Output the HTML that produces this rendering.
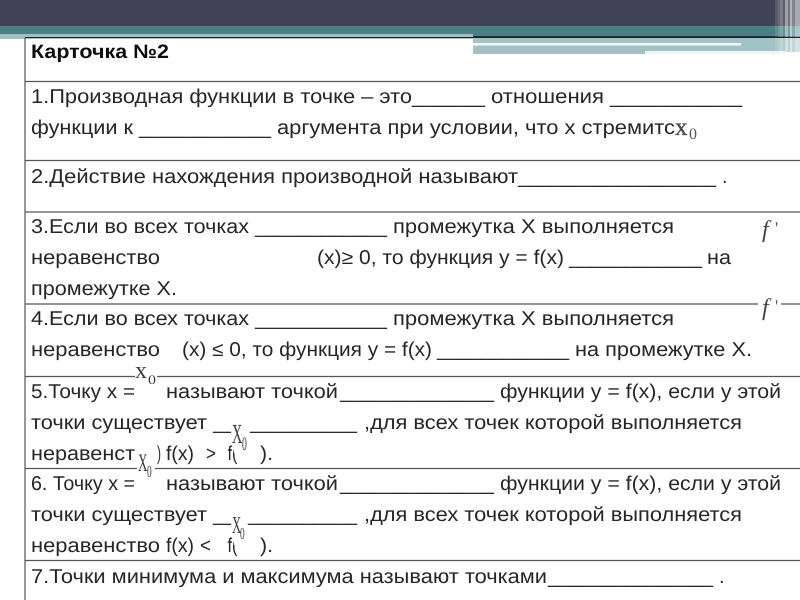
<!DOCTYPE html>
<html lang="ru">
<head>
<meta charset="utf-8">
<title>Карточка №2</title>
<style>
html,body{margin:0;padding:0;background:#fff;width:800px;height:600px;overflow:hidden}
svg{position:absolute;left:0;top:0}
text{font-family:"Liberation Sans",sans-serif;font-size:20px;fill:#282828;white-space:pre;text-rendering:geometricPrecision}
.b{font-weight:bold;fill:#111;font-size:19.5px}
.m{font-family:"Liberation Serif",serif;fill:#3c3c3c}
</style>
</head>
<body>
<svg width="800" height="600" viewBox="0 0 800 600">
<defs>
<filter id="s" x="-2%" y="-2%" width="104%" height="104%"><feGaussianBlur stdDeviation="0.32"/></filter>
</defs>

<rect x="0" y="0" width="800" height="26" fill="#414257"/>
<rect x="0" y="26" width="800" height="10" fill="#497f85"/>
<rect x="0" y="34" width="473" height="5" fill="#9cc0c3"/>
<rect x="473" y="36" width="327" height="2" fill="#17383c"/>
<rect x="473" y="38" width="327" height="14" fill="#a0c3c6"/>
<rect x="473" y="43" width="268" height="2.5" fill="#f4f9f9"/>
<rect x="473" y="46" width="172" height="8" fill="#a3c2c5"/>
<rect x="645" y="51" width="140" height="3" fill="#eef5f5"/>
<g fill="#fff">
<rect x="775" y="0" width="3" height="52" opacity=".12"/>
<rect x="778" y="0" width="2" height="52" opacity=".2"/>
<rect x="780" y="0" width="3" height="54" opacity=".3"/>
<rect x="783" y="0" width="2" height="54" opacity=".15"/>
<rect x="785" y="0" width="3" height="54" opacity=".5"/>
<rect x="788" y="0" width="2" height="54" opacity=".25"/>
<rect x="790" y="0" width="2" height="54" opacity=".6"/>
<rect x="792" y="0" width="3" height="54" opacity=".35"/>
<rect x="795" y="0" width="5" height="54" opacity=".55"/>
</g>

<g stroke="#555" fill="none">
<path d="M25 38V600" stroke-width="1.2"/>
<path d="M25 37.5H800" stroke-width="1" stroke="#222"/>
<path d="M25 81.5H800M25 160.5H800M25 212H800M25 304H800M25 376.5H800M25 468.5H800M25 560.5H800" stroke-width="1.2"/>
</g>

<g filter="url(#s)">
<text class="b" x="31" y="58" textLength="138" lengthAdjust="spacingAndGlyphs">Карточка №2</text>

<text x="31" y="103" textLength="381" lengthAdjust="spacingAndGlyphs">1.Производная функции в точке – это</text>
<text x="412" y="103" textLength="73" lengthAdjust="spacingAndGlyphs">_______</text>
<text x="491" y="103" textLength="113" lengthAdjust="spacingAndGlyphs">отношения</text>
<text x="610" y="103" textLength="132" lengthAdjust="spacingAndGlyphs">____________</text>

<text x="31" y="134" textLength="102" lengthAdjust="spacingAndGlyphs">функции к</text>
<text x="139" y="134" textLength="132" lengthAdjust="spacingAndGlyphs">____________</text>
<text x="277" y="134" textLength="398" lengthAdjust="spacingAndGlyphs">аргумента при условии, что x стремитс</text>

<text x="31" y="183" textLength="487" lengthAdjust="spacingAndGlyphs">2.Действие нахождения производной называют</text>
<text x="518" y="183" textLength="198" lengthAdjust="spacingAndGlyphs">__________________</text>
<text x="722" y="183">.</text>

<text x="31" y="233" textLength="218" lengthAdjust="spacingAndGlyphs">3.Если во всех точках</text>
<text x="255" y="233" textLength="132" lengthAdjust="spacingAndGlyphs">____________</text>
<text x="393" y="233" textLength="281" lengthAdjust="spacingAndGlyphs">промежутка X выполняется</text>
<text x="31" y="264" textLength="129" lengthAdjust="spacingAndGlyphs">неравенство</text>
<text x="317" y="264" textLength="247" lengthAdjust="spacingAndGlyphs">(x)≥ 0, то функция y = f(x)</text>
<text x="569" y="264" textLength="133" lengthAdjust="spacingAndGlyphs">____________</text>
<text x="707" y="264" textLength="24" lengthAdjust="spacingAndGlyphs">на</text>
<text x="31" y="295" textLength="146" lengthAdjust="spacingAndGlyphs">промежутке X.</text>

<text x="31" y="325" textLength="218" lengthAdjust="spacingAndGlyphs">4.Если во всех точках</text>
<text x="255" y="325" textLength="132" lengthAdjust="spacingAndGlyphs">____________</text>
<text x="393" y="325" textLength="281" lengthAdjust="spacingAndGlyphs">промежутка X выполняется</text>
<text x="31" y="356" textLength="129" lengthAdjust="spacingAndGlyphs">неравенство</text>
<text x="182" y="356" textLength="250" lengthAdjust="spacingAndGlyphs">(x) ≤ 0, то функция y = f(x)</text>
<text x="437" y="356" textLength="132" lengthAdjust="spacingAndGlyphs">____________</text>
<text x="575" y="356" textLength="177" lengthAdjust="spacingAndGlyphs">на промежутке X.</text>

<text x="31" y="398" textLength="104" lengthAdjust="spacingAndGlyphs">5.Точку x =</text>
<text x="166" y="398" textLength="172" lengthAdjust="spacingAndGlyphs">называют точкой</text>
<text x="340" y="398" textLength="154" lengthAdjust="spacingAndGlyphs">______________</text>
<text x="500" y="398" textLength="281" lengthAdjust="spacingAndGlyphs">функции y = f(x), если у этой</text>
<text x="31" y="429" textLength="176" lengthAdjust="spacingAndGlyphs">точки существует</text>
<text x="213" y="429" textLength="18" lengthAdjust="spacingAndGlyphs">__</text>
<text x="250" y="429" textLength="107" lengthAdjust="spacingAndGlyphs">__________</text>
<text x="364" y="429" textLength="378" lengthAdjust="spacingAndGlyphs">,для всех точек которой выполняется</text>
<text x="31" y="460" textLength="104" lengthAdjust="spacingAndGlyphs">неравенст</text>
<text x="166" y="460" textLength="28" lengthAdjust="spacingAndGlyphs">f(x)</text>
<text x="206" y="460" textLength="10" lengthAdjust="spacingAndGlyphs">&gt;</text>
<text x="227.5" y="460" textLength="10" lengthAdjust="spacingAndGlyphs">f(</text>
<text x="260" y="460" textLength="13" lengthAdjust="spacingAndGlyphs">).</text>

<text x="31" y="490" textLength="104" lengthAdjust="spacingAndGlyphs">6. Точку x =</text>
<text x="166" y="490" textLength="172" lengthAdjust="spacingAndGlyphs">называют точкой</text>
<text x="340" y="490" textLength="154" lengthAdjust="spacingAndGlyphs">______________</text>
<text x="500" y="490" textLength="281" lengthAdjust="spacingAndGlyphs">функции y = f(x), если у этой</text>
<text x="31" y="521" textLength="176" lengthAdjust="spacingAndGlyphs">точки существует</text>
<text x="213" y="521" textLength="18" lengthAdjust="spacingAndGlyphs">__</text>
<text x="248" y="521" textLength="109" lengthAdjust="spacingAndGlyphs">__________</text>
<text x="364" y="521" textLength="378" lengthAdjust="spacingAndGlyphs">,для всех точек которой выполняется</text>
<text x="31" y="552" textLength="129" lengthAdjust="spacingAndGlyphs">неравенство</text>
<text x="166" y="552" textLength="28" lengthAdjust="spacingAndGlyphs">f(x)</text>
<text x="200" y="552" textLength="11" lengthAdjust="spacingAndGlyphs">&lt;</text>
<text x="227.5" y="552" textLength="10" lengthAdjust="spacingAndGlyphs">f(</text>
<text x="260" y="552" textLength="13" lengthAdjust="spacingAndGlyphs">).</text>

<text x="31" y="583" textLength="516" lengthAdjust="spacingAndGlyphs">7.Точки минимума и максимума называют точками</text>
<text x="548" y="583" textLength="165" lengthAdjust="spacingAndGlyphs">_______________</text>
<text x="719" y="583">.</text>
</g>

<!-- formula patches -->
<g filter="url(#s)">
<rect x="234" y="445" width="16" height="8" fill="#fff"/>
<rect x="234" y="537" width="16" height="8" fill="#fff"/>

<rect x="135" y="372" width="22" height="9" fill="#fff"/>
<text class="m" x="135" y="378" style="font-size:24px" textLength="12" lengthAdjust="spacingAndGlyphs">x</text>
<text class="m" x="148" y="384" style="font-size:13px" textLength="8" lengthAdjust="spacingAndGlyphs">0</text>

<text class="m" x="675" y="135" style="font-size:25px;fill:#4a4a4a;stroke:#4a4a4a;stroke-width:.35" textLength="12.5" lengthAdjust="spacingAndGlyphs">x</text>
<text class="m" x="689" y="139" style="font-size:16px;fill:#555" textLength="8" lengthAdjust="spacingAndGlyphs">0</text>

<rect x="758" y="300" width="23" height="8" fill="#fff"/>
<text class="m" x="762" y="315" style="font-style:italic;font-size:24px;fill:#444">f</text>
<text class="m" x="775" y="312" style="font-size:18px;fill:#555">'</text>
<text class="m" x="762" y="237" style="font-style:italic;font-size:24px;fill:#444">f</text>
<text class="m" x="775" y="234" style="font-size:18px;fill:#555">'</text>

<text class="m" x="232" y="443" transform="translate(232 443) scale(.62 1.2) translate(-232 -443)" style="font-size:23px">X</text>
<text class="m" x="242" y="450" transform="translate(242 450) scale(.72 1.4) translate(-242 -450)" style="font-size:13.5px">0</text>

<rect x="137" y="452" width="20" height="14" fill="#fff"/>
<rect x="137" y="466" width="18" height="6" fill="#fff"/>
<text class="m" x="138" y="471" transform="translate(138 471) scale(.6 1.15) translate(-138 -471)" style="font-size:22px">X</text>
<text class="m" x="147" y="477" transform="translate(147 477) scale(.72 1.3) translate(-147 -477)" style="font-size:13px">0</text>
<text x="157" y="460" textLength="4" lengthAdjust="spacingAndGlyphs">)</text>

<text class="m" x="232" y="533" transform="translate(232 533) scale(.58 1.1) translate(-232 -533)" style="font-size:22px">X</text>
<text class="m" x="240" y="539" transform="translate(240 539) scale(.72 1.3) translate(-240 -539)" style="font-size:13px">0</text>
</g>
</svg>
</body>
</html>
